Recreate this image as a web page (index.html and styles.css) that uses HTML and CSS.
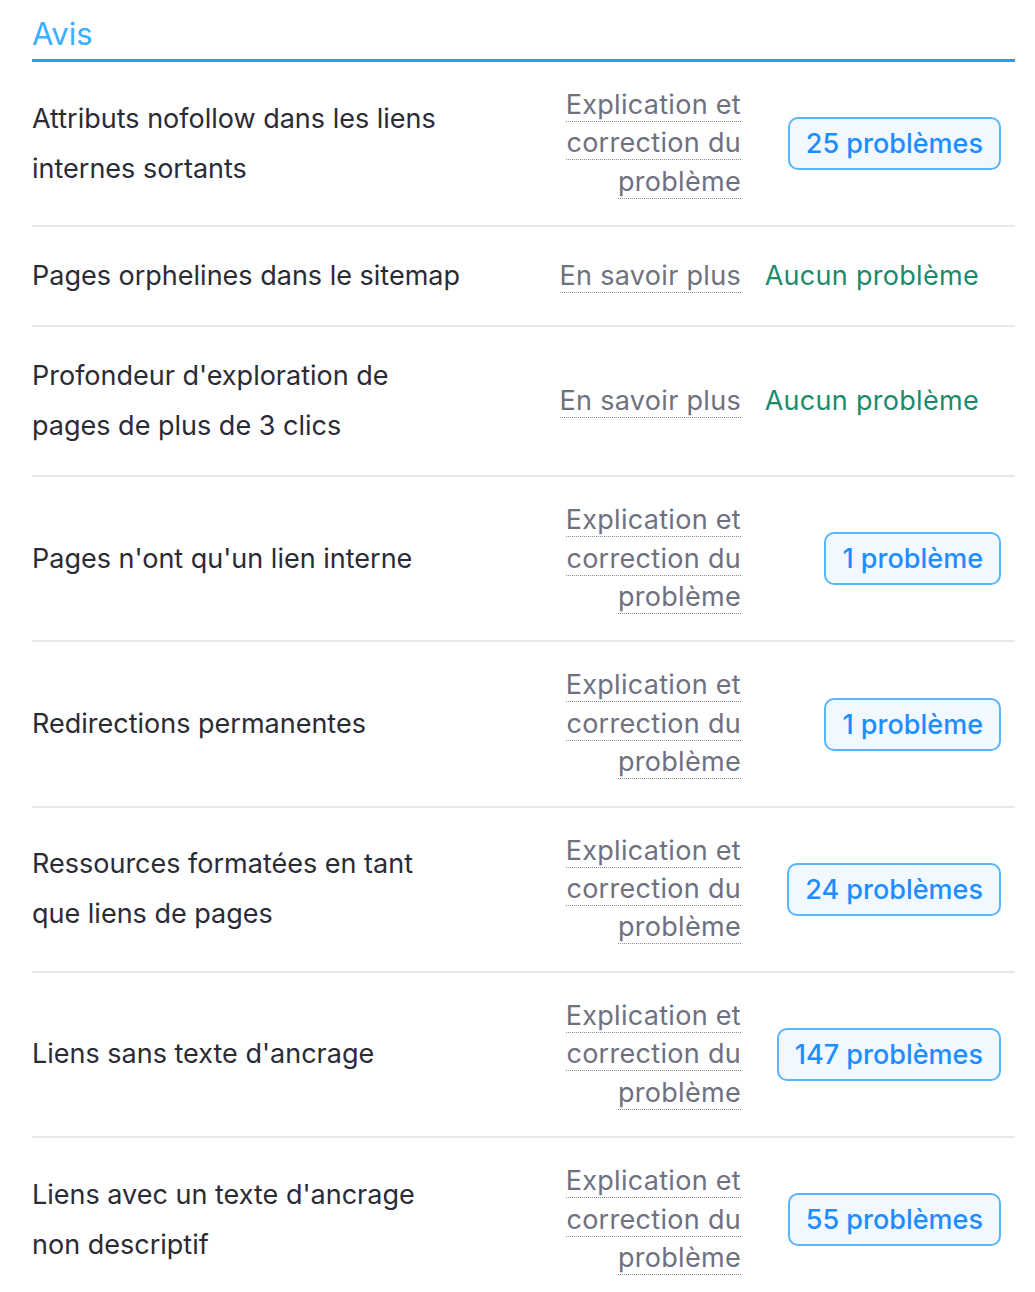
FILE: index.html
```html
<!DOCTYPE html>
<html lang="fr">
<head>
<meta charset="utf-8">
<link rel="stylesheet" href="styles.css">
</head>
<body>
<section class="panel">
  <h2 class="panel-title">Avis</h2>
  <div class="rows">
    <div class="row">
      <div class="row-title">Attributs nofollow dans les liens internes sortants</div>
      <div class="row-link"><a class="dotted">Explication et</a> <a class="dotted">correction du</a> <a class="dotted">problème</a></div>
      <div class="row-status"><span class="badge">25 problèmes</span></div>
    </div>
    <div class="row">
      <div class="row-title">Pages orphelines dans le sitemap</div>
      <div class="row-link"><a class="dotted">En savoir plus</a></div>
      <div class="row-status"><span class="ok">Aucun problème</span></div>
    </div>
    <div class="row">
      <div class="row-title">Profondeur d'exploration de pages de plus de 3 clics</div>
      <div class="row-link"><a class="dotted">En savoir plus</a></div>
      <div class="row-status"><span class="ok">Aucun problème</span></div>
    </div>
    <div class="row">
      <div class="row-title">Pages n'ont qu'un lien interne</div>
      <div class="row-link"><a class="dotted">Explication et</a> <a class="dotted">correction du</a> <a class="dotted">problème</a></div>
      <div class="row-status"><span class="badge">1 problème</span></div>
    </div>
    <div class="row">
      <div class="row-title">Redirections permanentes</div>
      <div class="row-link"><a class="dotted">Explication et</a> <a class="dotted">correction du</a> <a class="dotted">problème</a></div>
      <div class="row-status"><span class="badge">1 problème</span></div>
    </div>
    <div class="row">
      <div class="row-title">Ressources formatées en tant que liens de pages</div>
      <div class="row-link"><a class="dotted">Explication et</a> <a class="dotted">correction du</a> <a class="dotted">problème</a></div>
      <div class="row-status"><span class="badge">24 problèmes</span></div>
    </div>
    <div class="row">
      <div class="row-title">Liens sans texte d'ancrage</div>
      <div class="row-link"><a class="dotted">Explication et</a> <a class="dotted">correction du</a> <a class="dotted">problème</a></div>
      <div class="row-status"><span class="badge">147 problèmes</span></div>
    </div>
    <div class="row">
      <div class="row-title">Liens avec un texte d'ancrage non descriptif</div>
      <div class="row-link"><a class="dotted">Explication et</a> <a class="dotted">correction du</a> <a class="dotted">problème</a></div>
      <div class="row-status"><span class="badge">55 problèmes</span></div>
    </div>
  </div>
</section>
</body>
</html>
```
FILE: styles.css
```css
* { box-sizing: border-box; }
html, body { margin: 0; padding: 0; background: #ffffff; }
body {
  font-family: Inter, "Noto Sans", "Liberation Sans", sans-serif;
  color: #2b2b36;
  padding: 0 20px 0 32px;
}
.panel { width: 983px; }
.panel-title {
  margin: 0;
  padding-top: 14px;
  height: 62px;
  font-size: 31px;
  font-weight: 400;
  line-height: 40px;
  color: #3aaeff;
  border-bottom: 3px solid #1fa2ff;
}
.row {
  display: flex;
  align-items: center;
  padding: 24px 14px 24px 0;
  border-bottom: 2px solid #e6e6ec;
}
.row:last-child { border-bottom: none; }
.row-title {
  flex: 0 0 432px;
  font-size: 27px;
  line-height: 50px;
  color: #2b2b36;
}
.row-link {
  margin-left: auto;
  width: 190px;
  text-align: right;
  font-size: 27px;
  letter-spacing: 0.3px;
  line-height: 38.4px;
  color: #6f7180;
}
.dotted {
  border-bottom: 1px dotted #8a8a96;
  color: inherit;
  text-decoration: none;
}
.row-status {
  width: 260px;
  display: flex;
  justify-content: flex-end;
}
.badge {
  display: inline-block;
  font-size: 27px;
  font-weight: 500;
  line-height: 49px;
  padding: 0 16px;
  color: #1e8dff;
  background: #f1f8ff;
  border: 2px solid #58b6ff;
  border-radius: 10px;
}
.ok {
  font-size: 27px;
  letter-spacing: 0.3px;
  line-height: 38px;
  color: #1c8a6b;
  padding-right: 22px;
}
```
